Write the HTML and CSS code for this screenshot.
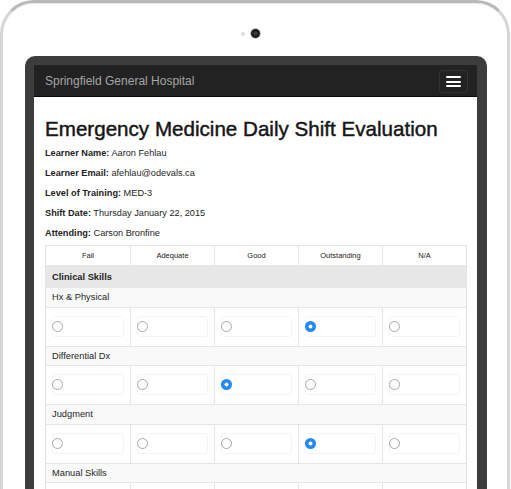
FILE: index.html
```html
<!DOCTYPE html>
<html lang="en">
<head>
<meta charset="utf-8">
<title>Emergency Medicine Daily Shift Evaluation</title>
<link rel="stylesheet" href="styles.css">
</head>
<body>
<div class="device">
  <div class="sensors">
    <span class="sensor-dot"></span>
    <span class="camera"></span>
  </div>
  <div class="bezel">
    <div class="screen">
      <nav class="navbar">
        <span class="brand">Springfield General Hospital</span>
        <button class="toggle" type="button" aria-label="Menu">
          <span class="bar"></span><span class="bar"></span><span class="bar"></span>
        </button>
      </nav>
      <main class="content">
        <h1 class="title">Emergency Medicine Daily Shift Evaluation</h1>
        <div class="info">
          <p><b>Learner Name:</b> Aaron Fehlau</p>
          <p><b>Learner Email:</b> afehlau@odevals.ca</p>
          <p><b>Level of Training:</b> MED-3</p>
          <p><b>Shift Date:</b> Thursday January 22, 2015</p>
          <p><b>Attending:</b> Carson Bronfine</p>
        </div>
        <div class="eval">
          <div class="row head">
            <div class="hcell">Fail</div>
            <div class="hcell">Adequate</div>
            <div class="hcell">Good</div>
            <div class="hcell">Outstanding</div>
            <div class="hcell">N/A</div>
          </div>
          <div class="row section">Clinical Skills</div>
          <div class="row item">Hx &amp; Physical</div>
          <div class="row choices">
            <div class="ccell"><span class="well"><input class="radio" type="radio" name="hx"></span></div>
            <div class="ccell"><span class="well"><input class="radio" type="radio" name="hx"></span></div>
            <div class="ccell"><span class="well"><input class="radio" type="radio" name="hx"></span></div>
            <div class="ccell"><span class="well"><input class="radio" type="radio" name="hx" checked></span></div>
            <div class="ccell"><span class="well"><input class="radio" type="radio" name="hx"></span></div>
          </div>
          <div class="row item">Differential Dx</div>
          <div class="row choices">
            <div class="ccell"><span class="well"><input class="radio" type="radio" name="dx"></span></div>
            <div class="ccell"><span class="well"><input class="radio" type="radio" name="dx"></span></div>
            <div class="ccell"><span class="well"><input class="radio" type="radio" name="dx" checked></span></div>
            <div class="ccell"><span class="well"><input class="radio" type="radio" name="dx"></span></div>
            <div class="ccell"><span class="well"><input class="radio" type="radio" name="dx"></span></div>
          </div>
          <div class="row item">Judgment</div>
          <div class="row choices">
            <div class="ccell"><span class="well"><input class="radio" type="radio" name="jd"></span></div>
            <div class="ccell"><span class="well"><input class="radio" type="radio" name="jd"></span></div>
            <div class="ccell"><span class="well"><input class="radio" type="radio" name="jd"></span></div>
            <div class="ccell"><span class="well"><input class="radio" type="radio" name="jd" checked></span></div>
            <div class="ccell"><span class="well"><input class="radio" type="radio" name="jd"></span></div>
          </div>
          <div class="row item">Manual Skills</div>
          <div class="row choices">
            <div class="ccell"><span class="well"><input class="radio" type="radio" name="ms"></span></div>
            <div class="ccell"><span class="well"><input class="radio" type="radio" name="ms"></span></div>
            <div class="ccell"><span class="well"><input class="radio" type="radio" name="ms"></span></div>
            <div class="ccell"><span class="well"><input class="radio" type="radio" name="ms"></span></div>
            <div class="ccell"><span class="well"><input class="radio" type="radio" name="ms"></span></div>
          </div>
        </div>
      </main>
    </div>
  </div>
</div>
</body>
</html>
```
FILE: styles.css
```css
html, body {
  margin: 0;
  padding: 0;
}
body {
  width: 511px;
  height: 489px;
  overflow: hidden;
  background: #fff;
  font-family: "Liberation Sans", Arial, Helvetica, sans-serif;
  color: #333;
}
.device {
  box-sizing: border-box;
  width: 510px;
  height: 720px;
  border: 3px solid #d6d6d6;
  border-top-color: #b9b9b9;
  border-radius: 34px;
  background: #fff;
  box-shadow: inset 0 1px 0 #e9e9e9;
}
.sensors {
  box-sizing: border-box;
  height: 53px;
  padding: 26px 9px 0 0;
  display: flex;
  justify-content: center;
  align-items: flex-start;
  gap: 6px;
}
.sensor-dot {
  width: 4px;
  height: 4px;
  margin-top: 2.5px;
  border-radius: 50%;
  background: #dcdcdc;
}
.camera {
  width: 9px;
  height: 9px;
  border-radius: 50%;
  background: radial-gradient(circle at 50% 50%, #3a3a3a 0 1.5px, #1b1b1b 2.5px);
  box-shadow: 0 0 0 0.5px #777;
}
.bezel {
  margin: 0 20px 0 22px;
  padding: 9px 10px 0 9px;
  background: #3d3d3d;
  border-radius: 10px 10px 0 0;
}
.screen {
  height: 600px;
  background: #fff;
}
.navbar {
  box-sizing: border-box;
  height: 32px;
  background: #222;
  border-bottom: 1px solid #080808;
  display: flex;
  align-items: center;
  justify-content: space-between;
  padding: 0 9px 0 11px;
}
.brand {
  color: #a6a6a6;
  font-size: 12px;
  line-height: 16px;
  margin-top: 1px;
}
.toggle {
  box-sizing: border-box;
  width: 29px;
  height: 23px;
  margin-top: 2px;
  padding: 0;
  border: 1px solid #333;
  border-radius: 3px;
  background: transparent;
  display: flex;
  flex-direction: column;
  align-items: center;
  justify-content: center;
  gap: 2.7px;
}
.bar {
  display: block;
  width: 15px;
  height: 2px;
  border-radius: 1px;
  background: #fff;
}
.content {
  padding: 0 10px 0 11px;
}
.title {
  margin: 20px 0 2px;
  font-size: 20.6px;
  line-height: 24px;
  font-weight: normal;
  color: #161616;
  -webkit-text-stroke: 0.45px #161616;
  white-space: nowrap;
}
.info p {
  margin: 0;
  font-size: 9.2px;
  line-height: 20px;
  color: #1e1e1e;
}
.eval {
  margin-top: 2px;
  border: 1px solid #e4e4e4;
  border-bottom: 0;
  font-size: 9.3px;
  color: #262626;
}
.row {
  box-sizing: border-box;
  border-bottom: 1px solid #e6e6e6;
}
.head {
  height: 20px;
  display: grid;
  grid-template-columns: repeat(5, 1fr);
}
.hcell {
  font-size: 7.5px;
  line-height: 19px;
  text-align: center;
  color: #222;
  border-left: 1px solid #e6e6e6;
}
.hcell:first-child,
.ccell:first-child {
  border-left: 0;
}
.section {
  height: 22px;
  line-height: 22px;
  padding-left: 6px;
  background: #e7e7e7;
  font-weight: bold;
  color: #1e1e1e;
}
.item {
  height: 19.6px;
  line-height: 19.6px;
  padding-left: 6px;
  background: #f9f9f9;
}
.choices {
  height: 39px;
  display: grid;
  grid-template-columns: repeat(5, 1fr);
}
.ccell {
  border-left: 1px solid #e6e6e6;
  padding: 8px 6px 0;
}
.well {
  box-sizing: border-box;
  display: flex;
  align-items: center;
  height: 21px;
  border: 1px solid #f4f4f4;
  border-radius: 3px;
}
.radio {
  appearance: none;
  -webkit-appearance: none;
  box-sizing: border-box;
  display: block;
  margin: 0 0 0 -1px;
  width: 11px;
  height: 11px;
  border: 1px solid #a9a9a9;
  border-radius: 50%;
  background: #fff;
}
.radio:checked {
  border: 0;
  background: radial-gradient(circle, #fff 0 1.7px, #2389f4 2.3px);
}
```
